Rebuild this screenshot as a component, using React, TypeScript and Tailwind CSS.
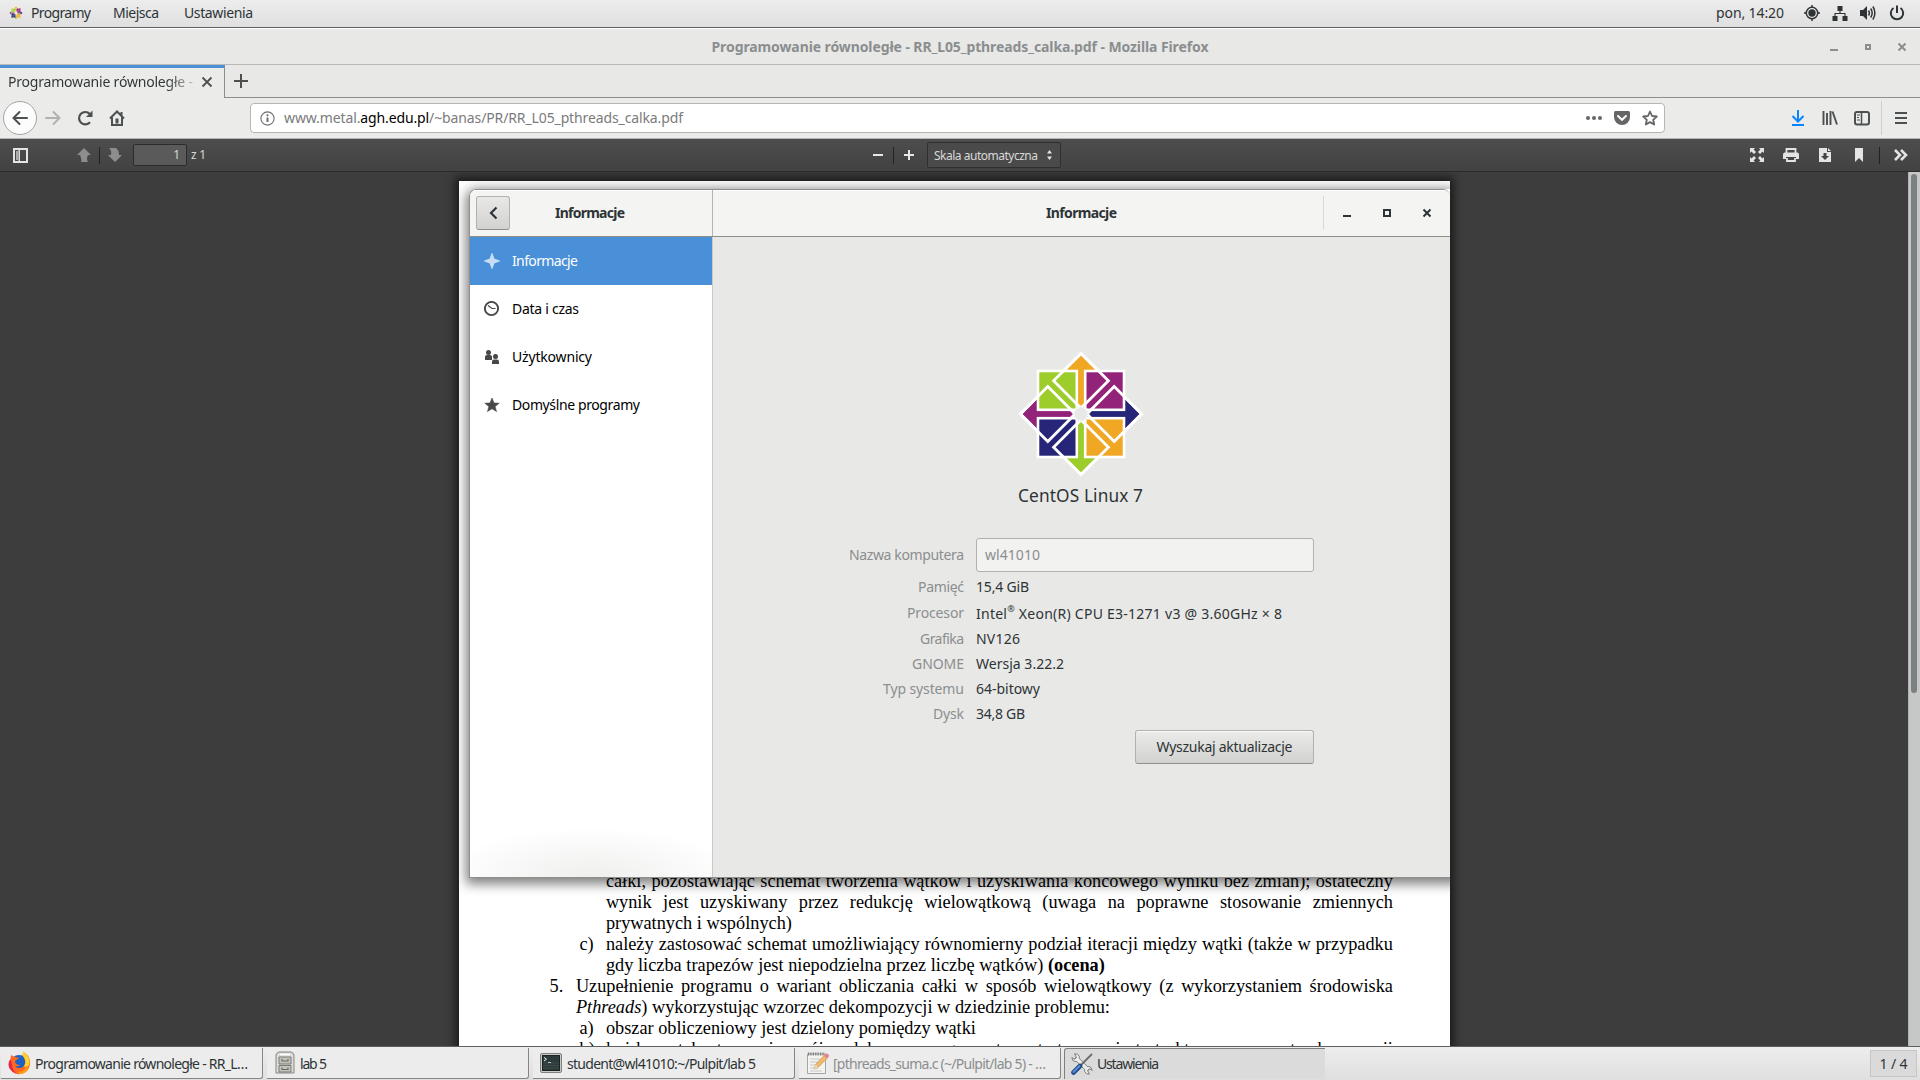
import { useLayoutEffect, useRef, type ReactNode } from "react";

/* Text set to an exact width by spreading the difference over letters or words. */
function Fit({ w, by = "letter", className = "", children }: { w: number; by?: "letter" | "word"; className?: string; children: ReactNode }) {
  const ref = useRef<HTMLSpanElement>(null);
  useLayoutEffect(() => {
    const el = ref.current;
    if (!el) return;
    el.style.letterSpacing = "0px";
    el.style.wordSpacing = "0px";
    const natural = el.getBoundingClientRect().width;
    const text = el.textContent || "";
    const slots = by === "word" ? text.split(" ").length - 1 : text.length - 1;
    const gap = (w - natural) / Math.max(slots, 1) + "px";
    if (by === "word") el.style.wordSpacing = gap;
    else el.style.letterSpacing = gap;
  }, [w, by]);
  return (
    <span className={"inline-block shrink-0 whitespace-nowrap " + className} style={{ width: w }}>
      <span ref={ref} className="inline-block">{children}</span>
    </span>
  );
}

function CentosLogo({ size, className = "" }: { size: number; className?: string }) {
  const diamonds = [
    { x: 0, y: -33.2, c: "#efa724" },
    { x: -33.2, y: 0, c: "#932279" },
    { x: 33.2, y: 0, c: "#262577" },
    { x: 0, y: 33.2, c: "#9ccd2a" },
  ];
  const squares = [
    { x: -43, y: -43, c: "#9ccd2a" },
    { x: 4.2, y: -43, c: "#932279" },
    { x: -43, y: 4.2, c: "#262577" },
    { x: 4.2, y: 4.2, c: "#efa724" },
  ];
  const pts = (d: { x: number; y: number }) => `${d.x},${d.y - 27.4} ${d.x + 27.4},${d.y} ${d.x},${d.y + 27.4} ${d.x - 27.4},${d.y}`;
  const star = Array.from({ length: 32 }, (_, i) => {
    const r = i % 2 ? 5.6 : 8.6;
    const a = (i * Math.PI) / 16;
    return `${(r * Math.cos(a)).toFixed(2)},${(r * Math.sin(a)).toFixed(2)}`;
  }).join(" ");
  return (
    <svg width={size} height={size} viewBox="-63 -63 126 126" className={className}>
      {diamonds.map((d, i) => <polygon key={i} points={pts(d)} fill={d.c} stroke="#fff" strokeWidth="2.8" />)}
      {squares.map((s, i) => <rect key={i} x={s.x} y={s.y} width="38.8" height="38.8" fill={s.c} stroke="#fff" strokeWidth="2.6" />)}
      {diamonds.map((d, i) => <polygon key={i} points={pts(d)} fill="none" stroke="#fff" strokeWidth="2.8" />)}
      <circle r="8.5" fill="#fff" fillOpacity=".55" />
      <polygon points={star} fill="#e8e8e6" />
    </svg>
  );
}

function TopBar() {
  return (
    <div className="flex h-7 shrink-0 items-center border-b border-[#5e605f] bg-gradient-to-b from-[#ededed] to-[#dfdfdf] pb-px text-[#2e3436]">
      <CentosLogo size={14} className="ml-[9px] mr-2" />
      <Fit w={60} className="mr-[22px]">Programy</Fit>
      <Fit w={46} className="mr-[25px]">Miejsca</Fit>
      <Fit w={69}>Ustawienia</Fit>
      <Fit w={68} className="ml-auto mr-5">pon, 14:20</Fit>
      <svg width="16" height="16" viewBox="0 0 16 16" className="mr-3">
        <circle cx="8" cy="8" r="5.7" fill="none" stroke="#2e3436" strokeWidth="1.5" />
        <circle cx="8" cy="8" r="3.7" fill="#2e3436" />
        <path d="M8 0v3M8 13v3M0 8h3M13 8h3" stroke="#2e3436" strokeWidth="1.4" />
      </svg>
      <svg width="16" height="16" viewBox="0 0 16 16" className="mr-3">
        <path d="M5.5 1h5v5h-5zM.5 11h5v5h-5zM10.5 11h5v5h-5z" fill="#2e3436" />
        <path d="M8 5v4M3 11V8.5h10V11" fill="none" stroke="#2e3436" strokeWidth="1.1" />
      </svg>
      <svg width="16" height="16" viewBox="0 0 16 16" className="mr-[13px]">
        <path d="M0 5h3l4-4v14l-4-4H0z" fill="#2e3436" />
        <path d="M8.5 5.5q1.7 2.5 0 5M10.7 3.5q3 4.5 0 9M12.9 1.5q4 6.5 0 13" fill="none" stroke="#2e3436" strokeWidth="1.5" />
      </svg>
      <svg width="16" height="16" viewBox="0 0 16 16" className="mr-[15px]">
        <path d="M4.5 3A6.2 6.2 0 1 0 11.5 3M8 .5V8" fill="none" stroke="#2e3436" strokeWidth="2" />
      </svg>
    </div>
  );
}

function WindowButtons({ small }: { small?: boolean }) {
  const s = small ? 34 : 40;
  const c = small ? "#8b8e8f" : "#2e3436";
  return (
    <div className="flex items-center">
      <svg width={s} height="20" viewBox={`${-s / 2} -10 ${s} 20`}><path d="M-4 3H4" stroke={c} strokeWidth="2" /></svg>
      <svg width={s} height="20" viewBox={`${-s / 2} -10 ${s} 20`}>
        {small ? <rect x="-2" y="-2" width="4" height="4" fill="none" stroke={c} strokeWidth="2" /> : <rect x="-3" y="-3" width="6" height="6" fill="none" stroke={c} strokeWidth="2" />}
      </svg>
      <svg width={s} height="20" viewBox={`${-s / 2} -10 ${s} 20`}><path d="M-3.5-3.5 3.5 3.5M3.5-3.5-3.5 3.5" stroke={c} strokeWidth="2" /></svg>
    </div>
  );
}

function TitleBar() {
  return (
    <div className="grid h-[37px] shrink-0 grid-cols-[1fr_auto_1fr] items-center border-b border-[#b9b9b7] border-t border-t-white bg-[#e8e8e6]">
      <span />
      <Fit w={497} className="font-bold text-[#8b8e8f]">Programowanie równoległe - RR_L05_pthreads_calka.pdf - Mozilla Firefox</Fit>
      <div className="justify-self-end pr-px"><WindowButtons small /></div>
    </div>
  );
}

function TabStrip() {
  return (
    <div className="flex h-[33px] shrink-0 bg-[#e8e8e6]">
      <div className="flex h-full w-[225px] items-center border-r border-r-[#8e8e8c] border-t-[3px] border-t-[#4a90d9] bg-[#ebebe9] pb-0.5 pl-2 text-[#2e3436]">
        <div className="w-[186px] overflow-hidden bg-gradient-to-r from-[#2e3436] from-85% to-[#c8c8c8] bg-clip-text text-transparent">
          <Fit w={185}>Programowanie równoległe -</Fit>
        </div>
        <svg width="12" height="12" viewBox="0 0 12 12" className="ml-[7px]"><path d="m1.5 1.5 9 9m0-9-9 9" stroke="#4c5051" strokeWidth="1.8" /></svg>
      </div>
      <div className="flex flex-1 items-center border-b border-[#8e8e8c] pl-[9px]">
        <svg width="14" height="14" viewBox="0 0 14 14"><path d="M7 0v14M0 7h14" stroke="#4c5051" strokeWidth="2" /></svg>
      </div>
    </div>
  );
}

function NavBar() {
  return (
    <div className="flex h-[41px] shrink-0 items-center border-b border-[#b4b4b0] bg-[#ebebe9]">
      <div className="ml-[3px] flex size-[34px] items-center justify-center rounded-full border border-[#a5a5a3] bg-[#fcfcfc]">
        <svg width="16" height="16" viewBox="0 0 16 16"><path d="M15 8H2M7.5 2 1.5 8l6 6" fill="none" stroke="#4c5051" strokeWidth="2" strokeLinecap="round" /></svg>
      </div>
      <svg width="16" height="16" viewBox="0 0 16 16" className="ml-2"><path d="M1 8h13M8.5 2l6 6-6 6" fill="none" stroke="#b1b1af" strokeWidth="2" strokeLinecap="round" /></svg>
      <svg width="16" height="16" viewBox="0 0 16 16" className="ml-4"><path d="M13 12.2A6.2 6.2 0 1 1 12.8 4" fill="none" stroke="#4c5051" strokeWidth="2.2" /><path d="M15.5.5V7H9z" fill="#4c5051" /></svg>
      <svg width="16" height="16" viewBox="0 0 16 16" className="ml-4">
        <path d="M1 8.5 8 1.5l7 7M12.5 2v4M3 7.5V15h10V7.5" fill="none" stroke="#4c5051" strokeWidth="2" />
        <path d="M6.5 8.5h3v5h-3z" fill="#4c5051" />
      </svg>
      <div className="ml-[125px] flex h-[30px] w-[1415px] items-center rounded border border-[#b6b6b3] bg-white pl-[9px] text-[#7b7b7b]">
        <svg width="15" height="15" viewBox="0 0 15 15"><circle cx="7.5" cy="7.5" r="6.6" fill="none" stroke="#6e6e6e" strokeWidth="1.1" /><path d="M7.5 6.5V11" stroke="#6e6e6e" strokeWidth="2" /><circle cx="7.5" cy="4.3" r="1.1" fill="#6e6e6e" /></svg>
        <Fit w={399} className="ml-[9px]">www.metal.<span className="text-black">agh.edu.pl</span>/~banas/PR/RR_L05_pthreads_calka.pdf</Fit>
        <svg width="16" height="16" viewBox="0 0 16 16" className="ml-auto"><g fill="#666"><circle cx="2" cy="8" r="2" /><circle cx="8" cy="8" r="2" /><circle cx="14" cy="8" r="2" /></g></svg>
        <svg width="16" height="16" viewBox="0 0 16 16" className="ml-3"><path d="M1.5 1h13Q16 1 16 2.5V7a8 8 0 0 1-16 0V2.5Q0 1 1.5 1z" fill="#666" /><path d="m4 6 4 3.8L12 6" fill="none" stroke="#fff" strokeWidth="2" strokeLinecap="round" /></svg>
        <svg width="16" height="16" viewBox="0 0 16 16" className="ml-3 mr-1.5"><path d="m8 1.5 2 4.5 4.8.5-3.6 3.3 1 4.7L8 12.1l-4.2 2.4 1-4.7L1.2 6.5 6 6z" fill="none" stroke="#666" strokeWidth="1.8" strokeLinejoin="round" /></svg>
      </div>
      <svg width="16" height="16" viewBox="0 0 16 16" className="ml-[125px]"><path d="M8 0v11M2.5 6 8 11.5 13.5 6M2 15h12" fill="none" stroke="#0a84ff" strokeWidth="2" /></svg>
      <svg width="16" height="16" viewBox="0 0 16 16" className="ml-4"><path d="M1.5 1v14M5 3v12M8.5 1v14M10.5 1.5l4.5 13" fill="none" stroke="#4c5051" strokeWidth="1.9" /></svg>
      <svg width="16" height="16" viewBox="0 0 16 16" className="ml-4"><rect x="1" y="2" width="14" height="12.5" rx="2" fill="none" stroke="#4c5051" strokeWidth="2" /><path d="M7.5 2v12" stroke="#4c5051" strokeWidth="1.5" /><path d="M3 5h3M3 7.5h2M3 10h3" stroke="#4c5051" /></svg>
      <div className="ml-[11px] h-[34px] w-px bg-[#cfcfcd]" />
      <svg width="12" height="14" viewBox="0 0 12 14" className="ml-[13px]"><path d="M0 2h12M0 7h12M0 12h12" stroke="#4c5051" strokeWidth="2" /></svg>
    </div>
  );
}

function PdfToolbar() {
  return (
    <div className="flex h-[33px] shrink-0 items-center border-b border-[#2b2b2b] bg-gradient-to-b from-[#4d4d4d] to-[#424242] text-[12px] text-[#d9d9d9]">
      <div className="flex w-[927px] items-center">
        <svg width="15" height="15" viewBox="0 0 15 15" className="ml-[12.5px]"><path d="M1 1h13v13H1z" fill="none" stroke="#e4e4e4" strokeWidth="2" /><path d="M3 3h2v9H3z" fill="#aaa" /><path d="M6.2 2v11" stroke="#e4e4e4" strokeWidth="1.5" /></svg>
        <svg width="14" height="14" viewBox="0 0 14 14" className="ml-[49.5px]"><path d="M7 0 0 7h3q2 5 1 7h7q-2-3 0-7h3z" fill="#8d8d8d" /></svg>
        <div className="ml-2 h-[17px] w-px bg-[#222]" />
        <svg width="14" height="14" viewBox="0 0 14 14" className="ml-2"><path d="m7 14 7-7h-3q0-5-3-7H1q3 3 2 7H0z" fill="#8d8d8d" /></svg>
        <div className="ml-[11px] flex h-[22px] w-[54px] items-center justify-end rounded-[2px] border border-[#2b2b2b] bg-[#5a5a5a] pr-1.5">1</div>
        <Fit w={15} className="ml-1">z 1</Fit>
        <svg width="12" height="12" viewBox="0 0 12 12" className="ml-auto"><path d="M1 6h10" stroke="#e8e8e8" strokeWidth="2" /></svg>
        <div className="ml-[9px] h-[17px] w-px bg-[#222]" />
        <svg width="12" height="12" viewBox="0 0 12 12" className="ml-[9px] mr-3"><path d="M1 6h10M6 1v10" stroke="#e8e8e8" strokeWidth="2" /></svg>
      </div>
      <div className="flex h-[26px] w-[134px] items-center rounded-[2px] border border-[#2f2f2f] bg-[#4a4a4a] pl-1.5">
        <Fit w={104} className="pt-0.5">Skala automatyczna</Fit>
        <svg width="7" height="10" viewBox="0 0 7 10" className="ml-[8px]"><path d="M3.5 0 6 3.5H1zM3.5 10 6 6.5H1z" fill="#e4e4e4" /></svg>
      </div>
      <svg width="14" height="14" viewBox="0 0 14 14" className="ml-auto"><path d="M0 0h5L3.6 1.5 6 4 4 6 1.5 3.6 0 5zM14 0v5l-1.5-1.4L10 6 8 4l2.4-2.5L9 0zM0 14V9l1.5 1.4L4 8l2 2-2.4 2.5L5 14zM14 14H9l1.4-1.5L8 10l2-2 2.5 2.4L14 9z" fill="#e4e4e4" /></svg>
      <svg width="16" height="14" viewBox="0 0 16 14" className="ml-[19px]"><path d="M3.5 5V1h9v4" fill="none" stroke="#e4e4e4" strokeWidth="1.8" /><path d="M1.5 4.5h13Q16 5 16 6.5V11h-3V9H3v2H0V6.5Q0 5 1.5 4.5z" fill="#e4e4e4" /><path d="M4 10v3h8v-3" fill="none" stroke="#e4e4e4" strokeWidth="1.8" /></svg>
      <svg width="12" height="14" viewBox="0 0 12 14" className="ml-5"><path d="M0 0h8v4h4v10H0zM9 0l3 3H9z" fill="#e4e4e4" /><path d="M4.5 5h3v3H10l-4 4-4-4h2.5z" fill="#444" /></svg>
      <svg width="8" height="14" viewBox="0 0 8 14" className="ml-6"><path d="M0 0h8v14L4 10l-4 4z" fill="#e4e4e4" /></svg>
      <div className="ml-4 h-[17px] w-px bg-[#222]" />
      <svg width="14" height="12" viewBox="0 0 14 12" className="ml-[14px] mr-[12px]"><path d="m1 1 5 5-5 5m6-10 5 5-5 5" fill="none" stroke="#e4e4e4" strokeWidth="2.6" /></svg>
    </div>
  );
}

type Line = { mark?: string; top?: boolean; w: number; just?: boolean; body: ReactNode };
const lines: Line[] = [
  { w: 787, just: true, body: "całki, pozostawiając schemat tworzenia wątków i uzyskiwania końcowego wyniku bez zmian); ostateczny" },
  { w: 787, just: true, body: "wynik jest uzyskiwany przez redukcję wielowątkową (uwaga na poprawne stosowanie zmiennych" },
  { w: 186, body: "prywatnych i wspólnych)" },
  { mark: "c)", w: 787, just: true, body: "należy zastosować schemat umożliwiający równomierny podział iteracji między wątki (także w przypadku" },
  { w: 499, body: <>gdy liczba trapezów jest niepodzielna przez liczbę wątków) <b>(ocena)</b></> },
  { mark: "5.", top: true, w: 817, just: true, body: "Uzupełnienie programu o wariant obliczania całki w sposób wielowątkowy (z wykorzystaniem środowiska" },
  { top: true, w: 534, body: <><i>Pthreads</i>) wykorzystując wzorzec dekompozycji w dziedzinie problemu:</> },
  { mark: "a)", w: 370, body: "obszar obliczeniowy jest dzielony pomiędzy wątki" },
  { mark: "b)", w: 787, just: true, body: "każdy wątek otrzymuje swój podobszar, a argumentem startowym jest struktura o parametrach operacji" },
];

function PdfPage() {
  return (
    <div className="mx-auto h-[865px] w-[991px] overflow-hidden bg-white pt-[689.6px] font-['Liberation_Serif',serif] text-[18.3px] leading-[21.12px] text-black shadow-[0_0_8px_4px_#1c1c1c]">
      {lines.map((l, i) => (
        <div key={i} className="flex h-[21.12px]">
          <span className={l.top ? "w-[117.4px] shrink-0 pl-[91px]" : "w-[147.4px] shrink-0 pl-[121px]"}>{l.mark}</span>
          <Fit w={l.w} by={l.just ? "word" : "letter"}>{l.body}</Fit>
        </div>
      ))}
    </div>
  );
}

const nav = [
  { label: "Informacje", w: 66, icon: <path d="M8 .5 10 6l5.5 2L10 10l-2 5.5L6 10 .5 8 6 6z" fill="#c9def4" stroke="#c9def4" /> },
  { label: "Data i czas", w: 67, icon: <><circle cx="7.5" cy="7.5" r="6.6" fill="none" stroke="#474747" strokeWidth="1.9" /><path d="m4 4.5 4 3h3.5" fill="none" stroke="#474747" strokeWidth="1.2" /></> },
  { label: "Użytkownicy", w: 80, icon: <g fill="#474747"><circle cx="4.5" cy="3.5" r="2.5" /><path d="M1 11V8q0-2 2-2h3q2 0 2 2v3z" /><circle cx="11.5" cy="7.5" r="2.5" /><path d="M8 15v-2.5q0-2 2-2h3q2 0 2 2V15z" /></g> },
  { label: "Domyślne programy", w: 128, icon: <path d="m8 1 2 5 5.2.2-4.1 3.3 1.4 5L8 11.7l-4.5 2.8 1.4-5L.8 6.2 6 6z" fill="#474747" stroke="#474747" strokeWidth=".6" /> },
];

const specs: { k: string; kw: number; v: ReactNode; vw: number }[] = [
  { k: "Pamięć", kw: 46, v: "15,4 GiB", vw: 53 },
  { k: "Procesor", kw: 57, v: <>Intel<span className="relative -top-[7px] text-[9px] leading-none">®</span> Xeon(R) CPU E3-1271 v3 @ 3.60GHz × 8</>, vw: 306 },
  { k: "Grafika", kw: 44, v: "NV126", vw: 44 },
  { k: "GNOME", kw: 52, v: "Wersja 3.22.2", vw: 88 },
  { k: "Typ systemu", kw: 81, v: "64-bitowy", vw: 64 },
  { k: "Dysk", kw: 31, v: "34,8 GB", vw: 49 },
];

function SettingsWindow() {
  return (
    <div className="absolute left-[469px] top-[17px] flex h-[689px] w-[981px] flex-col overflow-hidden rounded-t-[7px] border border-r-0 border-[#8f8f8c] bg-[#e8e8e6] text-[#2e3436]">
      <div className="flex h-[47px] shrink-0 border-b border-[#8f8f88] bg-[#f4f4f3] shadow-[inset_0_1px_0_white]">
        <div className="flex w-[243px] items-center border-r border-[#b4b4b0]">
          <div className="ml-1.5 flex size-[34px] items-center justify-center rounded-[3px] border border-[#b1b1ae] border-b-[#8f8f8c] bg-gradient-to-b from-[#e8e8e7] to-[#d2d2cf]">
            <svg width="16" height="16" viewBox="0 0 16 16"><path d="M11.5 2.5 6 8l5.5 5.5" fill="none" stroke="#2e3436" strokeWidth="2.2" /></svg>
          </div>
          <Fit w={70} className="ml-[45px] font-bold">Informacje</Fit>
        </div>
        <div className="flex flex-1 items-center">
          <Fit w={71} className="ml-[333px] font-bold">Informacje</Fit>
          <div className="ml-auto mr-[3px] flex items-center">
            <div className="mr-[3px] h-[34px] w-px bg-[#d8d8d6]" />
            <WindowButtons />
          </div>
        </div>
      </div>
      <div className="flex min-h-0 flex-1">
        <div className="w-[243px] border-r border-[#cacac8] bg-white bg-[radial-gradient(ellipse_150px_50px_at_50%_100%,#efefee,#ffffff)] text-black">
          {nav.map((n, i) => (
            <div key={n.label} className={i === 0 ? "flex h-12 items-center bg-[#4a90d9] pl-3.5 text-white" : "flex h-12 items-center pl-3.5"}>
              <svg width="16" height="16" viewBox="0 0 16 16" className="mr-3">{n.icon}</svg>
              <Fit w={n.w}>{n.label}</Fit>
            </div>
          ))}
        </div>
        <div className="flex flex-1 flex-col">
          <div className="flex flex-col items-center pr-0.5 pt-[114px]">
            <CentosLogo size={126} />
            <Fit w={125} className="mt-[5px] text-[17.3px] leading-7">CentOS Linux 7</Fit>
          </div>
          <div className="mt-7 flex items-center">
            <div className="flex w-[251px] justify-end text-[#8b8e8f]"><Fit w={115}>Nazwa komputera</Fit></div>
            <div className="ml-3 flex h-[34px] w-[338px] items-center rounded-[3px] border border-[#b1b1ae] bg-[#f2f2f1] pl-2 text-[#8b8e8f]"><Fit w={55}>wl41010</Fit></div>
          </div>
          <div className="mt-[2px]">
            {specs.map((s) => (
              <div key={s.k} className={s.k === "Procesor" ? "flex h-[27px] items-center" : "flex h-[25px] items-center"}>
                <div className="flex w-[251px] justify-end text-[#8b8e8f]"><Fit w={s.kw}>{s.k}</Fit></div>
                <Fit w={s.vw} className={s.k === "Procesor" ? "ml-3 mt-0.5" : "ml-3"}>{s.v}</Fit>
              </div>
            ))}
          </div>
          <div className="ml-[422px] mt-1 flex h-[34px] w-[179px] items-center justify-center rounded-[3px] border border-[#b1b1ae] border-b-[#8f8f8c] bg-gradient-to-b from-[#ebebea] to-[#d2d2cf] shadow-[inset_0_1px_0_#fafafa]">
            <Fit w={136}>Wyszukaj aktualizacje</Fit>
          </div>
        </div>
      </div>
    </div>
  );
}

const FirefoxIcon = (
  <svg width="22" height="24" viewBox="0 0 22 24" className="ml-[7px] mr-[5px]">
    <circle cx="11" cy="12.5" r="8.5" fill="#1c62c9" />
    <path d="M3 4 2.5 8Q-1 13 2 18q4 6 10 5 8-1 10-9Q23 5 15 .5q1 3-1 3.5 4 4 3 8-1 5-6 5-3 0-4-2 3 1 5-1-4 0-5-3 0-2 2-2.5l3-2Q8 7 6 5.5z" fill="#ff6a1f" />
    <path d="M15 .5q-1 4 1 6 3 5 0 9 5 1 5.5-3Q22 5 15 .5z" fill="#ffd62e" />
    <path d="M2.5 8Q-1 13 2 18q3 4 7 5-5-4-5-10z" fill="#e8264d" />
    <path d="M9 21q7 0 9-5 3 0 3 1-3 6-9 6z" fill="#ff9a1a" />
  </svg>
);
const CabinetIcon = (
  <svg width="20" height="24" viewBox="0 0 20 24" className="ml-[8px] mr-[5px]">
    <path d="M1 22V4q0-2 3-3h12q3 1 3 3v18z" fill="#dcdcd8" stroke="#858580" />
    <path d="M4 6h12v7H4zM4 14.5h12v6.5H4z" fill="#c3c3be" stroke="#7b7b76" />
    <path d="M7 8v2h6V8M7 16.5v2h6v-2" fill="none" stroke="#6b6b66" strokeWidth="1.2" />
    <path d="M5 3.5h10" stroke="#fff" strokeWidth="1.5" />
  </svg>
);
const TerminalIcon = (
  <svg width="22" height="20" viewBox="0 0 22 20" className="ml-[7px] mr-[5px]">
    <rect x=".5" y=".5" width="21" height="19" rx="1.5" fill="#c9c9c5" stroke="#7f7f7c" />
    <rect x="2.5" y="2.5" width="17" height="15" fill="#2d3a3a" stroke="#1a2222" />
    <path d="m4 4.5 2.5 1.7L4 8M8 9.5h3" fill="none" stroke="#e8efe8" />
    <path d="M3 10h16M3 12.5h16M3 15h16" stroke="#4a5856" strokeWidth=".6" />
  </svg>
);
const EditorIcon = (
  <svg width="23" height="24" viewBox="0 0 23 24" className="ml-[7px] mr-[4px] opacity-75">
    <path d="M1.5 3h18v19.5h-18z" fill="#f6f6f4" stroke="#8e8e8a" />
    <path d="M2 3h17" stroke="#555" strokeWidth="3" strokeDasharray="1.2 1.2" />
    <path d="M4 8h10M4 11h8M4 14h6M4 17h8M4 20h12" stroke="#b9b9b6" />
    <path d="m8 18 1.5-4.5L18 4.5l3 3-9 9z" fill="#f5a843" stroke="#b5782d" strokeWidth=".7" />
    <path d="m18 4.5 1.5-1.7q1.5-.8 3 .8.8 1.5 0 2.4L21 7.5z" fill="#e3606a" />
    <path d="m8 18 1.5-4.5L12 16.5z" fill="#ecd9b4" />
  </svg>
);
const ToolsIcon = (
  <svg width="22" height="22" viewBox="0 0 22 22" className="ml-[6px] mr-[4px]">
    <path d="M4.5 4.5 17.5 17.5" stroke="#7d7f7c" strokeWidth="4.6" />
    <path d="M3.5.8q4-.5 5 3 0 4-3.5 5Q1 8.5.8 4.5l2.7 1.7 2-1.6z" fill="#ecedea" stroke="#7d7f7c" />
    <path d="M18.5 21.2q-4 .5-5-3 0-4 3.5-5 4 .3 4.2 4.3l-2.7-1.7-2 1.6z" fill="#ecedea" stroke="#7d7f7c" />
    <path d="M5.500 5.500 16.500 16.500" stroke="#ecedea" strokeWidth="3.2" />
    <path d="M21 1 10 12" stroke="#6b6e6c" strokeWidth="1.8" />
    <path d="m9 13-6.500 6.500" stroke="#204a87" strokeWidth="4.6" strokeLinecap="round" />
    <path d="m8.500 13-6 6" stroke="#5a8fd0" strokeWidth="2" strokeLinecap="round" />
  </svg>
);

const tasks = [
  { icon: FirefoxIcon, text: "Programowanie równoległe - RR_L…", w: 213, cls: "" },
  { icon: CabinetIcon, text: "lab 5", w: 27, cls: "" },
  { icon: TerminalIcon, text: "student@wl41010:~/Pulpit/lab 5", w: 189, cls: "" },
  { icon: EditorIcon, text: "[pthreads_suma.c (~/Pulpit/lab 5) - …", w: 213, cls: "text-[#8b8e8f]" },
];

function TaskBar() {
  return (
    <div className="flex h-[34px] shrink-0 items-center border-t border-[#5e605f] bg-gradient-to-b from-[#ededed] to-[#dfdfdf] pl-px pr-[3px] text-[#2e3436]">
      {tasks.map((t) => (
        <div key={t.text} className={"mr-1 flex h-[31px] w-[262px] items-center rounded-br-[3px] border-b border-r border-[#858583] bg-[#ececec] " + t.cls}>
          {t.icon}
          <Fit w={t.w} className="pt-0.5">{t.text}</Fit>
        </div>
      ))}
      <div className="-ml-px flex h-[31px] w-[261px] items-center rounded-tl-[3px] border-l border-t border-[#7f7f7d] bg-[#dbdbdb]">
        {ToolsIcon}
        <Fit w={62}>Ustawienia</Fit>
      </div>
      <div className="ml-auto flex h-[27px] w-[47px] items-center justify-center border border-[#c6c6c6] bg-[#dadada]"><Fit w={28}>1 / 4</Fit></div>
    </div>
  );
}

export default function App() {
  return (
    <div className="flex h-[1080px] w-[1920px] flex-col overflow-hidden font-['Noto_Sans',sans-serif] text-[14px] leading-5">
      <TopBar />
      <TitleBar />
      <TabStrip />
      <NavBar />
      <PdfToolbar />
      <div className="relative flex h-[874px] shrink-0 overflow-hidden bg-[#3d3d3d]">
        <div className="w-[1908px] pt-[9px]">
          <PdfPage />
        </div>
        <div className="flex-1 border-l border-[#b2b4b4] bg-[#c6c8c8] pl-0.5 pt-[2px]">
          <div className="h-[519px] w-1.5 rounded-full bg-[#7b8082]" />
        </div>
        <div className="absolute left-[459px] top-[9px] h-[865px] w-[991px] overflow-hidden">
          <div className="absolute left-2.5 top-2 h-[689px] w-[987px] rounded-t-[7px] shadow-[0_3px_12px_3px_rgba(0,0,0,0.5)]" />
        </div>
        <SettingsWindow />
      </div>
      <TaskBar />
    </div>
  );
}
